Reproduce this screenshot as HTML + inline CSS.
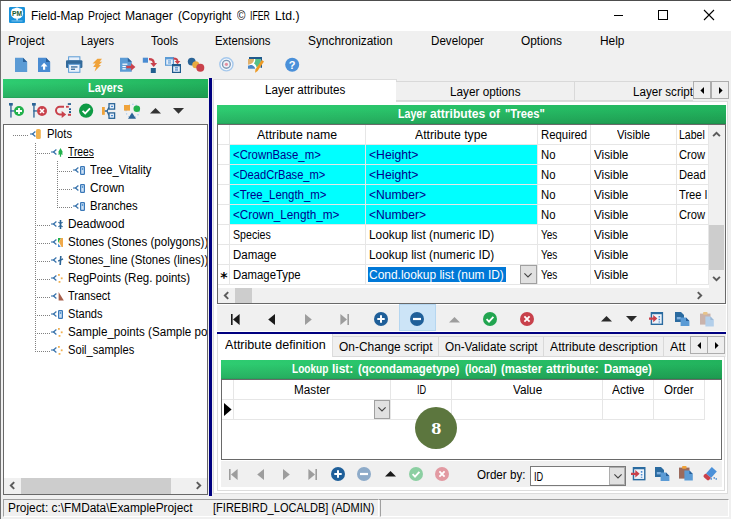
<!DOCTYPE html>
<html><head><meta charset="utf-8"><title>Field-Map Project Manager</title>
<style>
html,body{margin:0;padding:0;background:#f0f0f0;}
body{width:731px;height:519px;overflow:hidden;background:#f0f0f0;font-family:"Liberation Sans",sans-serif;font-size:12px;color:#000;position:relative;}
.a{position:absolute;white-space:nowrap;}
.t{position:absolute;white-space:nowrap;line-height:15px;height:15px;}
.g{background:linear-gradient(180deg,rgba(0,0,0,0) 0%,rgba(0,0,0,0) 20%,rgba(0,0,0,.13) 92%,rgba(0,0,0,.22) 100%),linear-gradient(90deg,#2ecc71 0%,#22b35d 100%);}
svg{position:absolute;overflow:visible;}
</style></head><body>
<div class="a" style="left:0px;top:0px;width:731px;height:1px;background:#4d4d4d;"></div>
<div class="a" style="left:0px;top:1px;width:1px;height:518px;background:#707070;"></div>
<div class="a" style="left:1px;top:1px;width:730px;height:30px;background:#fff;"></div>
<div class="t" style="left:30.7px;top:8.5px;"><span style="display:inline-block;transform-origin:0 50%;transform:scaleX(0.9839);">Field-Map</span></div>
<div class="t" style="left:87.5px;top:8.5px;"><span style="display:inline-block;transform-origin:0 50%;transform:scaleX(0.8703);">Project</span></div>
<div class="t" style="left:124.6px;top:8.5px;"><span style="display:inline-block;transform-origin:0 50%;transform:scaleX(1.0114);">Manager</span></div>
<div class="t" style="left:177.5px;top:8.5px;"><span style="display:inline-block;transform-origin:0 50%;transform:scaleX(0.9682);">(Copyright</span></div>
<div class="t" style="left:236.9px;top:8.5px;"><span style="display:inline-block;transform-origin:0 50%;transform:scaleX(0.9498);">©</span></div>
<div class="t" style="left:250.3px;top:8.5px;"><span style="display:inline-block;transform-origin:0 50%;transform:scaleX(0.7282);">IFER</span></div>
<div class="t" style="left:274.8px;top:8.5px;"><span style="display:inline-block;transform-origin:0 50%;transform:scaleX(1.0208);">Ltd.)</span></div>
<div class="t" style="left:7.5px;top:33.5px;"><span style="display:inline-block;transform-origin:0 50%;transform:scaleX(0.9774);">Project</span></div>
<div class="t" style="left:81.0px;top:33.5px;"><span style="display:inline-block;transform-origin:0 50%;transform:scaleX(0.9163);">Layers</span></div>
<div class="t" style="left:151.0px;top:33.5px;"><span style="display:inline-block;transform-origin:0 50%;transform:scaleX(0.9637);">Tools</span></div>
<div class="t" style="left:215.0px;top:33.5px;"><span style="display:inline-block;transform-origin:0 50%;transform:scaleX(0.9457);">Extensions</span></div>
<div class="t" style="left:308.0px;top:33.5px;"><span style="display:inline-block;transform-origin:0 50%;transform:scaleX(0.9898);">Synchronization</span></div>
<div class="t" style="left:430.5px;top:33.5px;"><span style="display:inline-block;transform-origin:0 50%;transform:scaleX(0.9689);">Developer</span></div>
<div class="t" style="left:521.0px;top:33.5px;"><span style="display:inline-block;transform-origin:0 50%;transform:scaleX(0.9917);">Options</span></div>
<div class="t" style="left:599.5px;top:33.5px;"><span style="display:inline-block;transform-origin:0 50%;transform:scaleX(0.9924);">Help</span></div>
<div class="a g" style="left:3px;top:79px;width:205px;height:19px"></div>
<div class="t" style="left:88.0px;top:80.5px;font-weight:bold;color:#fff;"><span style="display:inline-block;transform-origin:0 50%;transform:scaleX(0.9047);">Layers</span></div>
<div class="a" style="left:3px;top:124px;width:205px;height:371px;background:#fff;box-sizing:border-box;border:1px solid #696969;"></div>
<div class="t" style="left:46.6px;top:126.5px;"><span style="display:inline-block;transform-origin:0 50%;transform:scaleX(0.9373);">Plots</span></div>
<div class="t" style="left:68.3px;top:144.5px;"><span style="display:inline-block;transform-origin:0 50%;transform:scaleX(0.8566);text-decoration:underline;">Trees</span></div>
<div class="t" style="left:90.3px;top:162.5px;"><span style="display:inline-block;transform-origin:0 50%;transform:scaleX(0.9299);">Tree_Vitality</span></div>
<div class="t" style="left:90.3px;top:180.5px;"><span style="display:inline-block;transform-origin:0 50%;transform:scaleX(0.9946);">Crown</span></div>
<div class="t" style="left:90.3px;top:198.5px;"><span style="display:inline-block;transform-origin:0 50%;transform:scaleX(0.9391);">Branches</span></div>
<div class="t" style="left:68.3px;top:216.5px;"><span style="display:inline-block;transform-origin:0 50%;transform:scaleX(0.9847);">Deadwood</span></div>
<div class="t" style="left:68.3px;top:234.5px;width:138.7px;overflow:hidden;"><span style="display:inline-block;transform-origin:0 50%;transform:scaleX(0.9651);">Stones (Stones (polygons))</span></div>
<div class="t" style="left:68.3px;top:252.5px;width:138.7px;overflow:hidden;"><span style="display:inline-block;transform-origin:0 50%;transform:scaleX(0.9519);">Stones_line (Stones (lines))</span></div>
<div class="t" style="left:68.3px;top:270.5px;"><span style="display:inline-block;transform-origin:0 50%;transform:scaleX(0.9586);">RegPoints (Reg. points)</span></div>
<div class="t" style="left:68.3px;top:288.5px;"><span style="display:inline-block;transform-origin:0 50%;transform:scaleX(0.9149);">Transect</span></div>
<div class="t" style="left:68.3px;top:306.5px;"><span style="display:inline-block;transform-origin:0 50%;transform:scaleX(0.9238);">Stands</span></div>
<div class="t" style="left:68.3px;top:324.5px;width:138.7px;overflow:hidden;"><span style="display:inline-block;transform-origin:0 50%;transform:scaleX(0.9680);">Sample_points (Sample points)</span></div>
<div class="t" style="left:68.3px;top:342.5px;"><span style="display:inline-block;transform-origin:0 50%;transform:scaleX(0.9289);">Soil_samples</span></div>
<div class="a" style="left:4px;top:478px;width:203px;height:16px;background:#f0f0f0;"></div>
<div class="a" style="left:21px;top:478px;width:150px;height:16px;background:#cdcdcd;"></div>
<div class="a" style="left:209px;top:78px;width:3px;height:418px;background:#000080;"></div>
<div class="a" style="left:213px;top:101px;width:515px;height:393px;background:#fff;box-sizing:border-box;border:1px solid #dcdcdc;"></div>
<div class="a" style="left:213px;top:79px;width:184px;height:23px;background:#fff;box-sizing:border-box;border:1px solid #dcdcdc;border-bottom:none;"></div>
<div class="t" style="left:264.6px;top:82.5px;"><span style="display:inline-block;transform-origin:0 50%;transform:scaleX(0.9699);">Layer attributes</span></div>
<div class="a" style="left:396px;top:81px;width:297px;height:20px;background:#f0f0f0;box-sizing:border-box;border-top:1px solid #d9d9d9;border-bottom:1px solid #d9d9d9;"></div>
<div class="a" style="left:574px;top:82px;width:1px;height:19px;background:#d9d9d9;"></div>
<div class="t" style="left:449.5px;top:84.5px;"><span style="display:inline-block;transform-origin:0 50%;transform:scaleX(0.9787);">Layer options</span></div>
<div class="t" style="left:632.5px;top:84.5px;width:61px;overflow:hidden;"><span style="display:inline-block;transform-origin:0 50%;transform:scaleX(0.9675);">Layer script</span></div>
<div class="a" style="left:693px;top:81px;width:18px;height:18px;background:#eee;box-sizing:border-box;border:1px solid #adadad;"></div>
<div class="a" style="left:711px;top:81px;width:18px;height:18px;background:#eee;box-sizing:border-box;border:1px solid #adadad;"></div>
<div class="a g" style="left:217px;top:105px;width:509px;height:19px"></div>
<div class="t" style="left:397.7px;top:106.9px;font-weight:bold;color:#fff;"><span style="display:inline-block;transform-origin:0 50%;transform:scaleX(0.8871);">Layer</span></div>
<div class="t" style="left:430.0px;top:106.9px;font-weight:bold;color:#fff;"><span style="display:inline-block;transform-origin:0 50%;transform:scaleX(1.0097);">attributes</span></div>
<div class="t" style="left:488.5px;top:106.9px;font-weight:bold;color:#fff;"><span style="display:inline-block;transform-origin:0 50%;transform:scaleX(0.9622);">of</span></div>
<div class="t" style="left:504.5px;top:106.9px;font-weight:bold;color:#fff;"><span style="display:inline-block;transform-origin:0 50%;transform:scaleX(0.9313);">"Trees"</span></div>
<div class="a" style="left:217px;top:124px;width:509px;height:180px;background:#fff;box-sizing:border-box;border:1px solid #696969;"></div>
<div class="a" style="left:230px;top:145px;width:135px;height:19px;background:#00ffff;"></div>
<div class="a" style="left:366px;top:145px;width:171px;height:19px;background:#00ffff;"></div>
<div class="a" style="left:230px;top:165px;width:135px;height:19px;background:#00ffff;"></div>
<div class="a" style="left:366px;top:165px;width:171px;height:19px;background:#00ffff;"></div>
<div class="a" style="left:230px;top:185px;width:135px;height:19px;background:#00ffff;"></div>
<div class="a" style="left:366px;top:185px;width:171px;height:19px;background:#00ffff;"></div>
<div class="a" style="left:230px;top:205px;width:135px;height:19px;background:#00ffff;"></div>
<div class="a" style="left:366px;top:205px;width:171px;height:19px;background:#00ffff;"></div>
<div class="a" style="left:229px;top:125px;width:1px;height:160px;background:#e6e6e6;"></div>
<div class="a" style="left:365px;top:125px;width:1px;height:160px;background:#e6e6e6;"></div>
<div class="a" style="left:537px;top:125px;width:1px;height:160px;background:#e6e6e6;"></div>
<div class="a" style="left:590px;top:125px;width:1px;height:160px;background:#e6e6e6;"></div>
<div class="a" style="left:676px;top:125px;width:1px;height:160px;background:#e6e6e6;"></div>
<div class="a" style="left:708px;top:125px;width:1px;height:160px;background:#e6e6e6;"></div>
<div class="a" style="left:218px;top:144px;width:491px;height:1px;background:#e6e6e6;"></div>
<div class="a" style="left:218px;top:164px;width:491px;height:1px;background:#e6e6e6;"></div>
<div class="a" style="left:218px;top:184px;width:491px;height:1px;background:#e6e6e6;"></div>
<div class="a" style="left:218px;top:204px;width:491px;height:1px;background:#e6e6e6;"></div>
<div class="a" style="left:218px;top:224px;width:491px;height:1px;background:#e6e6e6;"></div>
<div class="a" style="left:218px;top:244px;width:491px;height:1px;background:#e6e6e6;"></div>
<div class="a" style="left:218px;top:264px;width:491px;height:1px;background:#e6e6e6;"></div>
<div class="a" style="left:218px;top:284px;width:491px;height:1px;background:#e6e6e6;"></div>
<div class="t" style="left:257.3px;top:127.8px;"><span style="display:inline-block;transform-origin:0 50%;transform:scaleX(1.0267);">Attribute name</span></div>
<div class="t" style="left:415.4px;top:127.8px;"><span style="display:inline-block;transform-origin:0 50%;transform:scaleX(1.0230);">Attribute type</span></div>
<div class="t" style="left:541.3px;top:127.8px;"><span style="display:inline-block;transform-origin:0 50%;transform:scaleX(0.9466);">Required</span></div>
<div class="t" style="left:617.0px;top:127.8px;"><span style="display:inline-block;transform-origin:0 50%;transform:scaleX(0.9391);">Visible</span></div>
<div class="t" style="left:678.7px;top:127.8px;"><span style="display:inline-block;transform-origin:0 50%;transform:scaleX(0.8788);">Label</span></div>
<div class="t" style="left:233.2px;top:148.0px;color:#00008c;"><span style="display:inline-block;transform-origin:0 50%;transform:scaleX(0.9468);">&lt;CrownBase_m&gt;</span></div>
<div class="t" style="left:369.2px;top:148.0px;color:#00008c;"><span style="display:inline-block;transform-origin:0 50%;transform:scaleX(1.0160);">&lt;Height&gt;</span></div>
<div class="t" style="left:540.5px;top:148.0px;"><span style="display:inline-block;transform-origin:0 50%;transform:scaleX(0.9450);">No</span></div>
<div class="t" style="left:593.7px;top:148.0px;"><span style="display:inline-block;transform-origin:0 50%;transform:scaleX(0.9761);">Visible</span></div>
<div class="t" style="left:678.7px;top:148.0px;width:30px;overflow:hidden;"><span style="display:inline-block;transform-origin:0 50%;transform:scaleX(0.9300);">Crow</span></div>
<div class="t" style="left:233.2px;top:168.0px;color:#00008c;"><span style="display:inline-block;transform-origin:0 50%;transform:scaleX(0.9295);">&lt;DeadCrBase_m&gt;</span></div>
<div class="t" style="left:369.2px;top:168.0px;color:#00008c;"><span style="display:inline-block;transform-origin:0 50%;transform:scaleX(1.0160);">&lt;Height&gt;</span></div>
<div class="t" style="left:540.5px;top:168.0px;"><span style="display:inline-block;transform-origin:0 50%;transform:scaleX(0.9450);">No</span></div>
<div class="t" style="left:593.7px;top:168.0px;"><span style="display:inline-block;transform-origin:0 50%;transform:scaleX(0.9761);">Visible</span></div>
<div class="t" style="left:678.7px;top:168.0px;width:30px;overflow:hidden;"><span style="display:inline-block;transform-origin:0 50%;transform:scaleX(0.9300);">Dead</span></div>
<div class="t" style="left:233.2px;top:188.0px;color:#00008c;"><span style="display:inline-block;transform-origin:0 50%;transform:scaleX(0.9512);">&lt;Tree_Length_m&gt;</span></div>
<div class="t" style="left:369.2px;top:188.0px;color:#00008c;"><span style="display:inline-block;transform-origin:0 50%;transform:scaleX(1.0085);">&lt;Number&gt;</span></div>
<div class="t" style="left:540.5px;top:188.0px;"><span style="display:inline-block;transform-origin:0 50%;transform:scaleX(0.9450);">No</span></div>
<div class="t" style="left:593.7px;top:188.0px;"><span style="display:inline-block;transform-origin:0 50%;transform:scaleX(0.9761);">Visible</span></div>
<div class="t" style="left:678.7px;top:188.0px;width:30px;overflow:hidden;"><span style="display:inline-block;transform-origin:0 50%;transform:scaleX(0.9300);">Tree l</span></div>
<div class="t" style="left:233.2px;top:208.0px;color:#00008c;"><span style="display:inline-block;transform-origin:0 50%;transform:scaleX(0.9784);">&lt;Crown_Length_m&gt;</span></div>
<div class="t" style="left:369.2px;top:208.0px;color:#00008c;"><span style="display:inline-block;transform-origin:0 50%;transform:scaleX(1.0085);">&lt;Number&gt;</span></div>
<div class="t" style="left:540.5px;top:208.0px;"><span style="display:inline-block;transform-origin:0 50%;transform:scaleX(0.9450);">No</span></div>
<div class="t" style="left:593.7px;top:208.0px;"><span style="display:inline-block;transform-origin:0 50%;transform:scaleX(0.9761);">Visible</span></div>
<div class="t" style="left:678.7px;top:208.0px;width:30px;overflow:hidden;"><span style="display:inline-block;transform-origin:0 50%;transform:scaleX(0.9300);">Crow</span></div>
<div class="t" style="left:233.2px;top:228.0px;"><span style="display:inline-block;transform-origin:0 50%;transform:scaleX(0.8855);">Species</span></div>
<div class="t" style="left:369.2px;top:228.0px;"><span style="display:inline-block;transform-origin:0 50%;transform:scaleX(0.9881);">Lookup list (numeric ID)</span></div>
<div class="t" style="left:540.5px;top:228.0px;"><span style="display:inline-block;transform-origin:0 50%;transform:scaleX(0.8326);">Yes</span></div>
<div class="t" style="left:593.7px;top:228.0px;"><span style="display:inline-block;transform-origin:0 50%;transform:scaleX(0.9761);">Visible</span></div>
<div class="t" style="left:233.2px;top:248.0px;"><span style="display:inline-block;transform-origin:0 50%;transform:scaleX(0.9546);">Damage</span></div>
<div class="t" style="left:369.2px;top:248.0px;"><span style="display:inline-block;transform-origin:0 50%;transform:scaleX(0.9881);">Lookup list (numeric ID)</span></div>
<div class="t" style="left:540.5px;top:248.0px;"><span style="display:inline-block;transform-origin:0 50%;transform:scaleX(0.8326);">Yes</span></div>
<div class="t" style="left:593.7px;top:248.0px;"><span style="display:inline-block;transform-origin:0 50%;transform:scaleX(0.9761);">Visible</span></div>
<div class="a" style="left:368px;top:267px;width:138px;height:15px;background:#0078d7;"></div>
<div class="t" style="left:233.2px;top:268.0px;"><span style="display:inline-block;transform-origin:0 50%;transform:scaleX(0.9471);">DamageType</span></div>
<div class="t" style="left:369.2px;top:268.0px;color:#fff;"><span style="display:inline-block;transform-origin:0 50%;transform:scaleX(0.9958);">Cond.lookup list (num ID)</span></div>
<div class="t" style="left:540.5px;top:268.0px;"><span style="display:inline-block;transform-origin:0 50%;transform:scaleX(0.8326);">Yes</span></div>
<div class="t" style="left:593.7px;top:268.0px;"><span style="display:inline-block;transform-origin:0 50%;transform:scaleX(0.9761);">Visible</span></div>
<div class="t" style="left:220.3px;top:268.5px;font-family:'DejaVu Sans',sans-serif;font-weight:bold;font-size:14px;line-height:16px;height:16px">*</div>
<div class="a" style="left:520px;top:265px;width:17px;height:19px;background:#e1e1e1;box-sizing:border-box;border:1px solid #a0a0a0;"></div>
<div class="a" style="left:709px;top:125px;width:16px;height:163px;background:#f0f0f0;"></div>
<div class="a" style="left:709px;top:225px;width:15px;height:45px;background:#cdcdcd;"></div>
<div class="a" style="left:218px;top:288px;width:507px;height:15px;background:#f0f0f0;"></div>
<div class="a" style="left:235px;top:288px;width:17px;height:15px;background:#cdcdcd;"></div>
<div class="a" style="left:217px;top:305px;width:509px;height:26px;background:#f0f0f0;"></div>
<div class="a" style="left:399px;top:304px;width:37px;height:27px;background:#cce4f7;box-sizing:border-box;border:1px solid #b5d6f0;"></div>
<div class="a" style="left:217px;top:332px;width:509px;height:2px;background:#000080;"></div>
<div class="a" style="left:217px;top:334px;width:509px;height:23px;background:#f0f0f0;"></div>
<div class="a" style="left:217px;top:356px;width:508px;height:135px;background:#fff;box-sizing:border-box;border:1px solid #dcdcdc;"></div>
<div class="a" style="left:217px;top:334px;width:116px;height:23px;background:#fff;box-sizing:border-box;border:1px solid #dcdcdc;border-bottom:none;border-top:none;"></div>
<div class="t" style="left:225.0px;top:338.1px;"><span style="display:inline-block;transform-origin:0 50%;transform:scaleX(1.0476);">Attribute definition</span></div>
<div class="a" style="left:333px;top:336px;width:357px;height:21px;background:#f0f0f0;box-sizing:border-box;border-top:1px solid #d9d9d9;border-bottom:1px solid #d9d9d9;"></div>
<div class="a" style="left:438px;top:337px;width:1px;height:19px;background:#d9d9d9;"></div>
<div class="a" style="left:543px;top:337px;width:1px;height:19px;background:#d9d9d9;"></div>
<div class="a" style="left:663px;top:337px;width:1px;height:19px;background:#d9d9d9;"></div>
<div class="t" style="left:338.5px;top:339.9px;"><span style="display:inline-block;transform-origin:0 50%;transform:scaleX(0.9944);">On-Change script</span></div>
<div class="t" style="left:445.0px;top:339.9px;"><span style="display:inline-block;transform-origin:0 50%;transform:scaleX(0.9802);">On-Validate script</span></div>
<div class="t" style="left:549.8px;top:339.9px;"><span style="display:inline-block;transform-origin:0 50%;transform:scaleX(1.0167);">Attribute description</span></div>
<div class="t" style="left:669.8px;top:339.9px;"><span style="display:inline-block;transform-origin:0 50%;transform:scaleX(1.0576);">Att</span></div>
<div class="a" style="left:690px;top:336px;width:18px;height:18px;background:#eee;box-sizing:border-box;border:1px solid #adadad;"></div>
<div class="a" style="left:707px;top:336px;width:18px;height:18px;background:#eee;box-sizing:border-box;border:1px solid #adadad;"></div>
<div class="a g" style="left:221px;top:360px;width:501px;height:19px"></div>
<div class="t" style="left:291.5px;top:362.1px;font-weight:bold;color:#fff;"><span style="display:inline-block;transform-origin:0 50%;transform:scaleX(0.8404);">Lookup</span></div>
<div class="t" style="left:331.8px;top:362.1px;font-weight:bold;color:#fff;"><span style="display:inline-block;transform-origin:0 50%;transform:scaleX(0.9987);">list:</span></div>
<div class="t" style="left:357.8px;top:362.1px;font-weight:bold;color:#fff;"><span style="display:inline-block;transform-origin:0 50%;transform:scaleX(0.9506);">(qcondamagetype)</span></div>
<div class="t" style="left:464.9px;top:362.1px;font-weight:bold;color:#fff;"><span style="display:inline-block;transform-origin:0 50%;transform:scaleX(0.8916);">(local)</span></div>
<div class="t" style="left:501.0px;top:362.1px;font-weight:bold;color:#fff;"><span style="display:inline-block;transform-origin:0 50%;transform:scaleX(0.9479);">(master</span></div>
<div class="t" style="left:546.2px;top:362.1px;font-weight:bold;color:#fff;"><span style="display:inline-block;transform-origin:0 50%;transform:scaleX(1.0154);">attribute:</span></div>
<div class="t" style="left:603.6px;top:362.1px;font-weight:bold;color:#fff;"><span style="display:inline-block;transform-origin:0 50%;transform:scaleX(0.9450);">Damage)</span></div>
<div class="a" style="left:221px;top:379px;width:501px;height:81px;background:#fff;box-sizing:border-box;border:1px solid #696969;"></div>
<div class="a" style="left:233px;top:380px;width:1px;height:40px;background:#e6e6e6;"></div>
<div class="a" style="left:390px;top:380px;width:1px;height:40px;background:#e6e6e6;"></div>
<div class="a" style="left:451px;top:380px;width:1px;height:40px;background:#e6e6e6;"></div>
<div class="a" style="left:602px;top:380px;width:1px;height:40px;background:#e6e6e6;"></div>
<div class="a" style="left:653px;top:380px;width:1px;height:40px;background:#e6e6e6;"></div>
<div class="a" style="left:704px;top:380px;width:1px;height:40px;background:#e6e6e6;"></div>
<div class="a" style="left:222px;top:399px;width:483px;height:1px;background:#e6e6e6;"></div>
<div class="a" style="left:222px;top:419px;width:483px;height:1px;background:#e6e6e6;"></div>
<div class="t" style="left:294.2px;top:383.1px;"><span style="display:inline-block;transform-origin:0 50%;transform:scaleX(0.9762);">Master</span></div>
<div class="t" style="left:416.8px;top:383.1px;"><span style="display:inline-block;transform-origin:0 50%;transform:scaleX(0.7667);">ID</span></div>
<div class="t" style="left:512.8px;top:383.1px;"><span style="display:inline-block;transform-origin:0 50%;transform:scaleX(0.9800);">Value</span></div>
<div class="t" style="left:611.5px;top:383.1px;"><span style="display:inline-block;transform-origin:0 50%;transform:scaleX(0.9947);">Active</span></div>
<div class="t" style="left:664.0px;top:383.1px;"><span style="display:inline-block;transform-origin:0 50%;transform:scaleX(0.9618);">Order</span></div>
<div class="a" style="left:374px;top:400px;width:16px;height:19px;background:#e1e1e1;box-sizing:border-box;border:1px solid #a0a0a0;"></div>
<div class="a" style="left:415px;top:407px;width:42px;height:42px;border-radius:21px;background:#5c763e"></div>
<div class="t" style="left:415px;top:418px;width:42px;height:20px;line-height:20px;text-align:center;color:#fff;font-family:'Liberation Serif',serif;font-weight:bold;font-size:17.5px"><span style="display:inline-block;transform:scaleX(1.15)">8</span></div>
<div class="a" style="left:221px;top:461px;width:501px;height:26px;background:#f0f0f0;"></div>
<div class="t" style="left:477.4px;top:467.9px;"><span style="display:inline-block;transform-origin:0 50%;transform:scaleX(0.9680);">Order by:</span></div>
<div class="a" style="left:530px;top:466px;width:96px;height:20px;background:#fff;box-sizing:border-box;border:1px solid #7a7a7a;"></div>
<div class="t" style="left:533.5px;top:469.5px;"><span style="display:inline-block;transform-origin:0 50%;transform:scaleX(0.7667);">ID</span></div>
<div class="a" style="left:609px;top:467px;width:16px;height:18px;background:#e1e1e1;box-sizing:border-box;border:1px solid #adadad;"></div>
<div class="a" style="left:3px;top:499px;width:726px;height:1px;background:#a0a0a0;"></div>
<div class="a" style="left:3px;top:499px;width:376px;height:18px;background:#f0f0f0;box-sizing:border-box;border:1px solid #a0a0a0;border-right-color:#fff;border-bottom-color:#fff;"></div>
<div class="t" style="left:7.5px;top:500.5px;"><span style="display:inline-block;transform-origin:0 50%;transform:scaleX(0.9883);">Project: c:\FMData\ExampleProject</span></div>
<div class="t" style="left:213.0px;top:500.5px;"><span style="display:inline-block;transform-origin:0 50%;transform:scaleX(0.9205);">[FIREBIRD_LOCALDB] (ADMIN)</span></div>
<div class="a" style="left:380px;top:499px;width:349px;height:18px;background:#f0f0f0;box-sizing:border-box;border:1px solid #a0a0a0;border-right-color:#fff;border-bottom-color:#fff;"></div>
<svg style="left:9px;top:7px" width="16" height="16" viewBox="0 0 16 16"><rect x="0" y="0" width="16" height="16" rx="1.200" fill="#1a92da"/><ellipse cx="8" cy="6.400" rx="6.100" ry="5.400" fill="#fff"/><circle cx="5" cy="4" r="2.600" fill="#fff"/><circle cx="11" cy="4" r="2.600" fill="#fff"/><circle cx="8" cy="3" r="2.600" fill="#fff"/><path d="M7.200 11h1.800l-.3 2.500h-1.200z" fill="#e8f4fb"/><rect x="2.500" y="13.500" width="11" height=".9" fill="#8fcaee"/><text x="8.100" y="9.300" font-size="7.200" font-weight="bold" text-anchor="middle" fill="#175a31" textLength="10" lengthAdjust="spacingAndGlyphs" font-family="Liberation Sans,sans-serif">PM</text></svg>
<svg style="left:614px;top:15px" width="9" height="1" viewBox="0 0 9 1"><rect width="9" height="1" fill="#000"/></svg>
<svg style="left:658px;top:10px" width="10" height="10" viewBox="0 0 10 10"><rect x=".5" y=".5" width="9" height="9" fill="none" stroke="#000" stroke-width="1"/></svg>
<svg style="left:704px;top:10px" width="10" height="10" viewBox="0 0 10 10"><path d="M0 0L10 10M10 0L0 10" stroke="#000" stroke-width="1.1" fill="none"/></svg>
<svg style="left:15px;top:57px" width="13" height="16" viewBox="0 0 13 16"><path d="M0 .7h8l4.2 4.2v10H0z" fill="#5b9bd5"/><path d="M8 .7l4.2 4.2H8z" fill="#2a6099"/></svg>
<svg style="left:38px;top:57px" width="13" height="16" viewBox="0 0 13 16"><path d="M0 .7h8l4.2 4.2v10H0z" fill="#4a8cd2"/><path d="M8 .7l4.2 4.2H8z" fill="#2a6099"/><path d="M6.1 5.8l3.4 3.8H7.2v3.2H5V9.600H2.700z" fill="#fff"/></svg>
<svg style="left:66px;top:56px" width="17" height="17" viewBox="0 0 17 17"><rect x="2.600" y=".8" width="11.3" height="4" fill="#e8f0fa" stroke="#5b9bd5" stroke-width="1"/><rect x="0" y="4.2" width="16.4" height="7.800" rx="1" fill="#336a9a"/><rect x="2.600" y="8.300" width="11.3" height="8" fill="#eaf2fb" stroke="#5b9bd5" stroke-width="1"/><rect x="5" y="10.3" width="6.500" height="1.300" fill="#336a9a"/><rect x="5" y="12.600" width="4" height="1.300" fill="#336a9a"/></svg>
<svg style="left:92px;top:58px" width="11" height="14" viewBox="0 0 11 14"><path d="M5.400 .8L10 .8 7.600 3.800 10.200 3.800 6.800 7 9 7 2.600 13.600 4 9 1.200 9 3.600 5.600 .6 5.600z" fill="#f0a33a"/></svg>
<svg style="left:120px;top:57px" width="16" height="16" viewBox="0 0 16 16"><path d="M0 .7h7.800l4 4v10H0z" fill="#5b9bd5"/><path d="M7.800 .7l4 4H7.800z" fill="#2a6099"/><rect x="2.400" y="6.600" width="5" height="1.200" fill="#fff"/><rect x="2.400" y="8.900" width="3.400" height="1.200" fill="#fff"/><rect x="2.400" y="11.200" width="3.400" height="1.200" fill="#fff"/><path d="M6.300 8.700h4.800V6.300l4.300 3.700-4.300 3.700v-2.400H6.300z" fill="#c9414b"/></svg>
<svg style="left:142px;top:57px" width="16" height="16" viewBox="0 0 16 16"><rect x=".8" y=".7" width="5.200" height="5" fill="#4a8cd2"/><rect x="8.800" y="11" width="5" height="5" fill="#22608f"/><path d="M7 2.200c3.300 0 4.800 1.300 4.800 4.200" stroke="#c9414b" stroke-width="2.200" fill="none"/><path d="M8.300 6l3.400 4 3.400-4z" fill="#c9414b"/></svg>
<svg style="left:165px;top:57px" width="17" height="16" viewBox="0 0 17 16"><rect x="0" y="0" width="9" height="8.800" fill="#5b9bd5"/><rect x="1.200" y="2.400" width="6.600" height="5.200" fill="#e4eefa"/><rect x="3" y="3.400" width="3" height="1.100" fill="#5b9bd5"/><rect x="3" y="5.400" width="3" height="1.100" fill="#5b9bd5"/><rect x="7" y="7" width="9" height="9" fill="#1f5a8c"/><rect x="8.200" y="9.300" width="6.600" height="5.500" fill="#e4eefa"/><rect x="10" y="10.300" width="3" height="1.100" fill="#3f7fc0"/><rect x="10" y="12.400" width="3" height="1.100" fill="#3f7fc0"/><path d="M8.500 1.600c3 0 4 .6 4 3" stroke="#c9414b" stroke-width="2" fill="none"/><path d="M9.600 4l2.900 3.300L15.400 4z" fill="#c9414b"/></svg>
<svg style="left:187px;top:57px" width="18" height="16" viewBox="0 0 18 16"><circle cx="4.700" cy="4.600" r="3.900" fill="#2b6496"/><circle cx="8.800" cy="7.700" r="3.500" fill="#e9aa3f"/><circle cx="13.300" cy="10.700" r="4" fill="#c9414b"/></svg>
<svg style="left:219px;top:57px" width="15" height="15" viewBox="0 0 15 15"><circle cx="7.400" cy="7.300" r="6.600" fill="#f3f7fc" stroke="#a5c8ec" stroke-width="1.400"/><circle cx="7.400" cy="7.300" r="3.900" fill="#eef2f7" stroke="#7d98b5" stroke-width="1.400"/><circle cx="7.400" cy="7.300" r="1.600" fill="#e58fa0"/></svg>
<svg style="left:248px;top:57px" width="17" height="16" viewBox="0 0 17 16"><rect x="0" y="2" width="12.500" height="9.800" fill="#fff"/><rect x="1" y="0" width="13" height="2" fill="#1f5a8c"/><rect x="12.500" y="0" width="1.500" height="10.800" fill="#1f5a8c"/><path d="M0 2H6.100C6.100 5 4 7.200 0 7.700z" fill="#e0b06a"/><path d="M7.200 2H12.500V7.500L8.600 10.400C8.200 8.400 7.200 7.200 6 6.500 7 5 7.400 3.500 7.200 2z" fill="#56c088"/><path d="M0 8.600C2 8.400 3 7.600 4.400 8.200 6 9 7 10 7.300 11.800H0z" fill="#4a86c5"/><path d="M13.800 3L16 4.500 9.600 14 7.100 15.800 7.400 12.600z" fill="#ee9a24"/></svg>
<svg style="left:285px;top:57px" width="15" height="15" viewBox="0 0 15 15"><circle cx="7.200" cy="7.700" r="7" fill="#4a90d9"/><text x="7.200" y="11.700" font-size="11" font-weight="bold" text-anchor="middle" fill="#fff" font-family="Liberation Sans,sans-serif">?</text></svg>
<svg style="left:9px;top:103px" width="16" height="16" viewBox="0 0 16 16"><rect x="0" y="0" width="3.800" height="2.600" fill="#2b6496"/><rect x="1.300" y="0" width="1.300" height="14.600" fill="#2b6496"/><rect x="1.300" y="7.300" width="4" height="1.300" fill="#2b6496"/><circle cx="10" cy="8" r="5" fill="#22b14c"/><path d="M7 8h6M10 5v6" stroke="#fff" stroke-width="1.800"/></svg>
<svg style="left:32px;top:103px" width="16" height="16" viewBox="0 0 16 16"><rect x="0" y="0" width="3.800" height="2.600" fill="#2b6496"/><rect x="1.300" y="0" width="1.300" height="14.600" fill="#2b6496"/><rect x="1.300" y="7.300" width="4" height="1.300" fill="#2b6496"/><circle cx="10" cy="8" r="5" fill="#c9414b"/><path d="M8 6l4 4M12 6l-4 4" stroke="#fff" stroke-width="1.600"/></svg>
<svg style="left:55px;top:103px" width="17" height="16" viewBox="0 0 17 16"><path d="M9 3.800H4.800A3.800 3.800 0 0 0 4.800 11.400H7" stroke="#c9414b" stroke-width="2" fill="none"/><path d="M6.700 7.900L11.200 11.400 6.700 15z" fill="#c9414b"/><rect x="12.800" y=".2" width="3.200" height="1.700" fill="#1f5a8c"/><rect x="11" y="2.900" width="2.800" height="1.800" fill="#c9414b"/><rect x="14" y="5.300" width="2" height="1.700" fill="#1f5a8c"/><rect x="14" y="8.100" width="2" height="1.900" fill="#1f5a8c"/><rect x="12.900" y="10.800" width="3.100" height="2" fill="#c9414b"/></svg>
<svg style="left:79px;top:103px" width="15" height="15" viewBox="0 0 15 15"><circle cx="7.100" cy="7.700" r="7.100" fill="#0f9b45"/><path d="M3.600 7.800l2.600 2.600 4.800-5" stroke="#fff" stroke-width="1.800" fill="none"/></svg>
<svg style="left:102px;top:103px" width="14" height="16" viewBox="0 0 14 16"><rect x="0" y="4" width="2.800" height="7.800" fill="#f0a33a"/><path d="M2.800 8h2.400M5 8l2-3.600M5 8l2 4.600" stroke="#2b6496" stroke-width="1.300" fill="none"/><rect x="7" y=".7" width="5.600" height="5.400" fill="#e4eefa" stroke="#2b6496" stroke-width="1.300"/><rect x="7" y="9.900" width="5.600" height="5.400" fill="#e4eefa" stroke="#2b6496" stroke-width="1.300"/><rect x="9" y="2.800" width="2" height="1.200" fill="#4a8cd2"/><rect x="9" y="12" width="2" height="1.200" fill="#4a8cd2"/></svg>
<svg style="left:124px;top:103px" width="17" height="16" viewBox="0 0 17 16"><circle cx="8.600" cy="8" r="6.600" fill="none" stroke="#9cc2ea" stroke-width="1.200" stroke-dasharray="1.200 2.200"/><rect x="0" y="2" width="6" height="5.600" fill="#f0a33a"/><circle cx="12.800" cy="5.700" r="3.300" fill="#22b14c"/><path d="M4 15.800l4-6.400 4 6.400z" fill="#2b6496"/></svg>
<svg style="left:150px;top:108px" width="11" height="6" viewBox="0 0 11 6"><path d="M0 5.600L5.500 0 11 5.600z" fill="#333"/></svg>
<svg style="left:173px;top:108px" width="11" height="6" viewBox="0 0 11 6"><path d="M0 0h11L5.500 5.800z" fill="#333"/></svg>
<svg style="left:699.5px;top:86.5px" width="4" height="7" viewBox="0 0 4 7"><path d="M4 0v7L.4 3.500z" fill="#000"/></svg>
<svg style="left:718.5px;top:86.5px" width="4" height="7" viewBox="0 0 4 7"><path d="M0 0v7l3.600-3.500z" fill="#000"/></svg>
<svg style="left:696.5px;top:341.5px" width="4" height="7" viewBox="0 0 4 7"><path d="M4 0v7L.4 3.500z" fill="#000"/></svg>
<svg style="left:714.5px;top:341.5px" width="4" height="7" viewBox="0 0 4 7"><path d="M0 0v7l3.600-3.500z" fill="#000"/></svg>
<svg style="left:230.5px;top:314.0px" width="9" height="11" viewBox="0 0 9 11"><rect x="0" y="0" width="1.600" height="11" fill="#1a1a1a"/><path d="M8.600 0v11L2 5.500z" fill="#1a1a1a"/></svg>
<svg style="left:267.5px;top:314.0px" width="7" height="11" viewBox="0 0 7 11"><path d="M7 0v11L.2 5.500z" fill="#1a1a1a"/></svg>
<svg style="left:304.5px;top:314.0px" width="7" height="11" viewBox="0 0 7 11"><path d="M0 0v11l6.800-5.500z" fill="#9d9d9d"/></svg>
<svg style="left:340.0px;top:314.0px" width="9" height="11" viewBox="0 0 9 11"><rect x="7.400" y="0" width="1.600" height="11" fill="#9d9d9d"/><path d="M.4 0v11L7 5.500z" fill="#9d9d9d"/></svg>
<svg style="left:374.3px;top:312px" width="14" height="14" viewBox="0 0 14 14"><circle cx="7" cy="7" r="7" fill="#1f5f99"/><path d="M3.300 7h7.400M7 3.300v7.400" stroke="#fff" stroke-width="2"/></svg>
<svg style="left:410px;top:312px" width="14" height="14" viewBox="0 0 14 14"><circle cx="7" cy="7" r="7" fill="#1f5f99"/><path d="M3 7h8" stroke="#fff" stroke-width="2.200"/></svg>
<svg style="left:448.7px;top:316.5px" width="11" height="6" viewBox="0 0 11 6"><path d="M0 5.600L5.5 0 11 5.600z" fill="#9d9d9d"/></svg>
<svg style="left:482.8px;top:312px" width="14" height="14" viewBox="0 0 14 14"><circle cx="7" cy="7" r="7" fill="#22a550"/><path d="M3.600 7.200l2.400 2.400 4.400-4.800" stroke="#fff" stroke-width="1.800" fill="none"/></svg>
<svg style="left:519.7px;top:312px" width="14" height="14" viewBox="0 0 14 14"><circle cx="7" cy="7" r="7" fill="#c8414b"/><path d="M4.400 4.400l5.200 5.200M9.600 4.400l-5.200 5.200" stroke="#fff" stroke-width="1.800"/></svg>
<svg style="left:600.5px;top:316.3px" width="11" height="6" viewBox="0 0 11 6"><path d="M0 5.600L5.5 0 11 5.600z" fill="#2a2a2a"/></svg>
<svg style="left:625.5px;top:316px" width="11" height="6" viewBox="0 0 11 6"><path d="M0 0h11L5.5 5.800z" fill="#2a2a2a"/></svg>
<svg style="left:648.8px;top:311.7px" width="14.0" height="13.0" viewBox="0 0 14 13"><rect x="2.400" y=".7" width="11" height="11.600" fill="#eef4fb" stroke="#2b6ba0" stroke-width="1.400"/><rect x="2.400" y=".2" width="11" height="2" fill="#2b6ba0"/><path d="M0 5.500h4.200V3L8.400 6.600 4.200 10.200V7.700H0z" fill="#c9414b"/><path d="M10.300 4v6.400" stroke="#4a8cd2" stroke-width="1.500" stroke-dasharray="1.500 1.200"/></svg>
<svg style="left:674.9px;top:312px" width="14.5" height="14.0" viewBox="0 0 14.500 14"><path d="M0 0h6l3 3v7H0z" fill="#2b6ba0"/><rect x="1.800" y="5" width="4" height="2.400" fill="#7fb0e0"/><path d="M5.600 5.500h5.400l3.400 3.400v5H5.600z" fill="#5b9bd5"/><path d="M11 5.500l3.400 3.400H11z" fill="#2a6099"/></svg>
<svg style="left:699.6px;top:311.5px" width="14.0" height="14.5" viewBox="0 0 14 14.500"><rect x="0" y="1.600" width="10.500" height="11" fill="#c9b3ac"/><rect x="3" y="0" width="4.600" height="2.800" rx="1" fill="#e8c48a"/><path d="M5.400 4.600h5l3.400 3.400v6.400H5.400z" fill="#b3cfea"/><path d="M10.400 4.600l3.400 3.400h-3.400z" fill="#9db9d6"/></svg>
<svg style="left:229.3px;top:468.5px" width="9" height="11" viewBox="0 0 9 11"><rect x="0" y="0" width="1.600" height="11" fill="#9d9d9d"/><path d="M8.600 0v11L2 5.500z" fill="#9d9d9d"/></svg>
<svg style="left:257.1px;top:468.5px" width="7" height="11" viewBox="0 0 7 11"><path d="M7 0v11L.2 5.500z" fill="#9d9d9d"/></svg>
<svg style="left:283.0px;top:468.5px" width="7" height="11" viewBox="0 0 7 11"><path d="M0 0v11l6.800-5.500z" fill="#9d9d9d"/></svg>
<svg style="left:307.5px;top:468.5px" width="9" height="11" viewBox="0 0 9 11"><rect x="7.400" y="0" width="1.600" height="11" fill="#9d9d9d"/><path d="M.4 0v11L7 5.500z" fill="#9d9d9d"/></svg>
<svg style="left:330.9px;top:466.8px" width="14" height="14" viewBox="0 0 14 14"><circle cx="7" cy="7" r="7" fill="#1f5f99"/><path d="M3.300 7h7.400M7 3.300v7.400" stroke="#fff" stroke-width="2"/></svg>
<svg style="left:357.2px;top:466.8px" width="14" height="14" viewBox="0 0 14 14"><circle cx="7" cy="7" r="7" fill="#8eabc9"/><path d="M3 7h8" stroke="#fff" stroke-width="2.200"/></svg>
<svg style="left:384.7px;top:471.2px" width="11" height="6" viewBox="0 0 11 6"><path d="M0 5.600L5.5 0 11 5.600z" fill="#1a1a1a"/></svg>
<svg style="left:408.7px;top:466.8px" width="14" height="14" viewBox="0 0 14 14"><circle cx="7" cy="7" r="7" fill="#8ccfa2"/><path d="M3.600 7.200l2.400 2.400 4.400-4.800" stroke="#fff" stroke-width="1.800" fill="none"/></svg>
<svg style="left:435px;top:466.8px" width="14" height="14" viewBox="0 0 14 14"><circle cx="7" cy="7" r="7" fill="#e29aa2"/><path d="M4.400 4.400l5.200 5.200M9.600 4.400l-5.200 5.200" stroke="#fff" stroke-width="1.800"/></svg>
<svg style="left:630.6px;top:466.8px" width="14.42" height="13.39" viewBox="0 0 14 13"><rect x="2.400" y=".7" width="11" height="11.600" fill="#eef4fb" stroke="#2b6ba0" stroke-width="1.400"/><rect x="2.400" y=".2" width="11" height="2" fill="#2b6ba0"/><path d="M0 5.500h4.200V3L8.400 6.600 4.200 10.200V7.700H0z" fill="#c9414b"/><path d="M10.300 4v6.400" stroke="#4a8cd2" stroke-width="1.500" stroke-dasharray="1.500 1.200"/></svg>
<svg style="left:654.8px;top:466.8px" width="14.5" height="14.0" viewBox="0 0 14.500 14"><path d="M0 0h6l3 3v7H0z" fill="#2b6ba0"/><rect x="1.800" y="5" width="4" height="2.400" fill="#7fb0e0"/><path d="M5.600 5.500h5.400l3.400 3.400v5H5.600z" fill="#5b9bd5"/><path d="M11 5.500l3.400 3.400H11z" fill="#2a6099"/></svg>
<svg style="left:678.6px;top:466.4px" width="14.0" height="14.5" viewBox="0 0 14 14.500"><rect x="0" y="1.600" width="10.500" height="11" fill="#9b6a5c"/><rect x="3" y="0" width="4.600" height="2.800" rx="1" fill="#f0a33a"/><path d="M5.400 4.600h5l3.400 3.400v6.400H5.400z" fill="#5b9bd5"/><path d="M10.400 4.600l3.400 3.400h-3.400z" fill="#2a6099"/></svg>
<svg style="left:702px;top:466.8px" width="15" height="14" viewBox="0 0 15 14"><path d="M9.800 0l5 4.400-5.800 6.600-5-4.400z" fill="#4a90d9"/><path d="M4 6.600l5 4.400-1.400 1.600a2 2 0 0 1-2.800 .2L2.200 10.600a2 2 0 0 1-.2-2.800z" fill="#c9414b"/><rect x="8.500" y="11.200" width="1.500" height="1.500" fill="#4a8cd2"/><rect x="11.500" y="10.200" width="1.500" height="1.500" fill="#4a8cd2"/><rect x="13.500" y="11.200" width="1.500" height="1.500" fill="#4a8cd2"/></svg>
<svg style="left:524.3px;top:273.0px" width="8" height="5" viewBox="0 0 8 5"><path d="M.4 .4L4 4 7.600 .4" stroke="#444" stroke-width="1.100" fill="none"/></svg>
<svg style="left:378px;top:407.3px" width="8" height="5" viewBox="0 0 8 5"><path d="M.4 .4L4 4 7.600 .4" stroke="#444" stroke-width="1.100" fill="none"/></svg>
<svg style="left:613.5px;top:473.5px" width="8" height="5" viewBox="0 0 8 5"><path d="M.4 .4L4 4 7.600 .4" stroke="#444" stroke-width="1.100" fill="none"/></svg>
<svg style="left:7.699999999999999px;top:481.2px" width="9" height="9" viewBox="0 0 9 9"><path d="M6.200 1.100L2.800 4.500 6.200 7.900" stroke="#5a5a5a" stroke-width="1.900" fill="none"/></svg>
<svg style="left:193.8px;top:481.2px" width="9" height="9" viewBox="0 0 9 9"><path d="M2.800 1.100L6.200 4.500 2.800 7.900" stroke="#5a5a5a" stroke-width="1.900" fill="none"/></svg>
<svg style="left:221.6px;top:290.9px" width="9" height="9" viewBox="0 0 9 9"><path d="M6.200 1.100L2.800 4.500 6.200 7.900" stroke="#5a5a5a" stroke-width="1.900" fill="none"/></svg>
<svg style="left:695.3px;top:291.0px" width="9" height="9" viewBox="0 0 9 9"><path d="M2.800 1.100L6.200 4.500 2.800 7.900" stroke="#5a5a5a" stroke-width="1.900" fill="none"/></svg>
<svg style="left:711.9px;top:129.9px" width="9" height="9" viewBox="0 0 9 9"><path d="M1.100 6.200L4.500 2.800 7.900 6.200" stroke="#5a5a5a" stroke-width="1.900" fill="none"/></svg>
<svg style="left:711.9px;top:274.3px" width="9" height="9" viewBox="0 0 9 9"><path d="M1.100 2.800L4.500 6.200 7.900 2.800" stroke="#5a5a5a" stroke-width="1.900" fill="none"/></svg>
<svg style="left:224px;top:402.5px" width="8" height="13" viewBox="0 0 8 13"><path d="M0 0v13l7.600-6.500z" fill="#000"/></svg>
<div class="a" style="left:13px;top:135px;width:15px;height:1px;background:repeating-linear-gradient(90deg,#808080 0 1px,transparent 1px 2px)"></div>
<div class="a" style="left:35px;top:143px;width:1px;height:209px;background:repeating-linear-gradient(180deg,#808080 0 1px,transparent 1px 2px)"></div>
<div class="a" style="left:37px;top:153px;width:13px;height:1px;background:repeating-linear-gradient(90deg,#808080 0 1px,transparent 1px 2px)"></div>
<div class="a" style="left:37px;top:225px;width:13px;height:1px;background:repeating-linear-gradient(90deg,#808080 0 1px,transparent 1px 2px)"></div>
<div class="a" style="left:37px;top:243px;width:13px;height:1px;background:repeating-linear-gradient(90deg,#808080 0 1px,transparent 1px 2px)"></div>
<div class="a" style="left:37px;top:261px;width:13px;height:1px;background:repeating-linear-gradient(90deg,#808080 0 1px,transparent 1px 2px)"></div>
<div class="a" style="left:37px;top:279px;width:13px;height:1px;background:repeating-linear-gradient(90deg,#808080 0 1px,transparent 1px 2px)"></div>
<div class="a" style="left:37px;top:297px;width:13px;height:1px;background:repeating-linear-gradient(90deg,#808080 0 1px,transparent 1px 2px)"></div>
<div class="a" style="left:37px;top:315px;width:13px;height:1px;background:repeating-linear-gradient(90deg,#808080 0 1px,transparent 1px 2px)"></div>
<div class="a" style="left:37px;top:333px;width:13px;height:1px;background:repeating-linear-gradient(90deg,#808080 0 1px,transparent 1px 2px)"></div>
<div class="a" style="left:37px;top:351px;width:13px;height:1px;background:repeating-linear-gradient(90deg,#808080 0 1px,transparent 1px 2px)"></div>
<div class="a" style="left:57px;top:161px;width:1px;height:47px;background:repeating-linear-gradient(180deg,#808080 0 1px,transparent 1px 2px)"></div>
<div class="a" style="left:59px;top:171px;width:13px;height:1px;background:repeating-linear-gradient(90deg,#808080 0 1px,transparent 1px 2px)"></div>
<div class="a" style="left:59px;top:189px;width:13px;height:1px;background:repeating-linear-gradient(90deg,#808080 0 1px,transparent 1px 2px)"></div>
<div class="a" style="left:59px;top:207px;width:13px;height:1px;background:repeating-linear-gradient(90deg,#808080 0 1px,transparent 1px 2px)"></div>
<svg style="left:29.6px;top:131px" width="6" height="6" viewBox="0 0 6 6"><path d="M5.400 .5L2.500 3 5.400 5.500" stroke="#3a74ac" stroke-width="1.250" fill="none"/><path d="M0 3h3.600" stroke="#3a74ac" stroke-width="1.100"/></svg>
<svg style="left:35.9px;top:128.8px" width="5" height="10" viewBox="0 0 5 10"><rect x="0" y="0" width="4.800" height="10" rx="1.600" fill="#f0b24e"/></svg>
<svg style="left:51.2px;top:149px" width="6" height="6" viewBox="0 0 6 6"><path d="M5.400 .5L2.500 3 5.400 5.500" stroke="#3a74ac" stroke-width="1.250" fill="none"/><path d="M0 3h3.600" stroke="#3a74ac" stroke-width="1.100"/></svg>
<svg style="left:57.5px;top:147.5px" width="5" height="9" viewBox="0 0 5 9"><path d="M2.500 0L5 4.600H3.800L5 6.600H3.100V8.800H1.900V6.600H0L1.200 4.600H0z" fill="#22b14c"/></svg>
<svg style="left:73.3px;top:167px" width="6" height="6" viewBox="0 0 6 6"><path d="M5.400 .5L2.500 3 5.400 5.500" stroke="#3a74ac" stroke-width="1.250" fill="none"/><path d="M0 3h3.600" stroke="#3a74ac" stroke-width="1.100"/></svg>
<svg style="left:80.0px;top:165.5px" width="5" height="9" viewBox="0 0 5 9"><rect x=".6" y=".6" width="3.800" height="7.800" rx=".6" fill="#cfe2f5" stroke="#3a78b8" stroke-width="1.200"/><rect x="1.800" y="2" width="1.400" height="2" fill="#5b9bd5"/></svg>
<svg style="left:73.3px;top:185px" width="6" height="6" viewBox="0 0 6 6"><path d="M5.400 .5L2.500 3 5.400 5.500" stroke="#3a74ac" stroke-width="1.250" fill="none"/><path d="M0 3h3.600" stroke="#3a74ac" stroke-width="1.100"/></svg>
<svg style="left:80.0px;top:183.5px" width="5" height="9" viewBox="0 0 5 9"><rect x=".6" y=".6" width="3.800" height="7.800" rx=".6" fill="#cfe2f5" stroke="#3a78b8" stroke-width="1.200"/><rect x="1.800" y="2" width="1.400" height="2" fill="#5b9bd5"/></svg>
<svg style="left:73.3px;top:203px" width="6" height="6" viewBox="0 0 6 6"><path d="M5.400 .5L2.500 3 5.400 5.500" stroke="#3a74ac" stroke-width="1.250" fill="none"/><path d="M0 3h3.600" stroke="#3a74ac" stroke-width="1.100"/></svg>
<svg style="left:80.0px;top:201.5px" width="5" height="9" viewBox="0 0 5 9"><rect x=".6" y=".6" width="3.800" height="7.800" rx=".6" fill="#cfe2f5" stroke="#3a78b8" stroke-width="1.200"/><rect x="1.800" y="2" width="1.400" height="2" fill="#5b9bd5"/></svg>
<svg style="left:51.2px;top:221px" width="6" height="6" viewBox="0 0 6 6"><path d="M5.400 .5L2.500 3 5.400 5.500" stroke="#3a74ac" stroke-width="1.250" fill="none"/><path d="M0 3h3.600" stroke="#3a74ac" stroke-width="1.100"/></svg>
<svg style="left:57.5px;top:219.5px" width="5" height="9" viewBox="0 0 5 9"><path d="M2.500 0v9" stroke="#2b6496" stroke-width="1.600"/><path d="M.4 2.200l2.100 1.200 2.100-1.200M.4 6.800l2.100-1.200 2.100 1.200" stroke="#2b6496" stroke-width="1.200" fill="none"/></svg>
<svg style="left:51.2px;top:239px" width="6" height="6" viewBox="0 0 6 6"><path d="M5.400 .5L2.500 3 5.400 5.500" stroke="#3a74ac" stroke-width="1.250" fill="none"/><path d="M0 3h3.600" stroke="#3a74ac" stroke-width="1.100"/></svg>
<svg style="left:57.5px;top:237.5px" width="5" height="9" viewBox="0 0 5 9"><path d="M0 0h3L0 5z" fill="#22b14c"/><path d="M3 0h2v9H3.500L1 4z" fill="#f0a94a"/><path d="M0 5.500L2.800 9H0z" fill="#4a8cd2"/></svg>
<svg style="left:51.2px;top:257px" width="6" height="6" viewBox="0 0 6 6"><path d="M5.400 .5L2.500 3 5.400 5.500" stroke="#3a74ac" stroke-width="1.250" fill="none"/><path d="M0 3h3.600" stroke="#3a74ac" stroke-width="1.100"/></svg>
<svg style="left:57.5px;top:255.5px" width="5" height="9" viewBox="0 0 5 9"><path d="M2.800 0L2.200 9" stroke="#2b6496" stroke-width="1.600"/><path d="M.2 5.200L5 2.800" stroke="#2b6496" stroke-width="1.300"/></svg>
<svg style="left:51.2px;top:275px" width="6" height="6" viewBox="0 0 6 6"><path d="M5.400 .5L2.500 3 5.400 5.500" stroke="#3a74ac" stroke-width="1.250" fill="none"/><path d="M0 3h3.600" stroke="#3a74ac" stroke-width="1.100"/></svg>
<svg style="left:58.1px;top:273.5px" width="5" height="9" viewBox="0 0 5 9"><rect x="0" y="0" width="1.800" height="1.800" fill="#f0b050"/><rect x="2.800" y="3.400" width="1.800" height="1.800" fill="#f0b050"/><rect x=".6" y="7" width="1.800" height="1.800" fill="#f0b050"/></svg>
<svg style="left:51.2px;top:293px" width="6" height="6" viewBox="0 0 6 6"><path d="M5.400 .5L2.500 3 5.400 5.500" stroke="#3a74ac" stroke-width="1.250" fill="none"/><path d="M0 3h3.600" stroke="#3a74ac" stroke-width="1.100"/></svg>
<svg style="left:57.5px;top:291.5px" width="6" height="9" viewBox="0 0 6 9"><path d="M.6 0L5.800 8.400H.6z" fill="#a8604c"/></svg>
<svg style="left:51.2px;top:311px" width="6" height="6" viewBox="0 0 6 6"><path d="M5.400 .5L2.500 3 5.400 5.500" stroke="#3a74ac" stroke-width="1.250" fill="none"/><path d="M0 3h3.600" stroke="#3a74ac" stroke-width="1.100"/></svg>
<svg style="left:57.9px;top:309.5px" width="5" height="9" viewBox="0 0 5 9"><rect x=".6" y=".6" width="3.800" height="7.800" rx=".6" fill="#cfe2f5" stroke="#3a78b8" stroke-width="1.200"/><rect x="1.800" y="2" width="1.400" height="2" fill="#5b9bd5"/></svg>
<svg style="left:51.2px;top:329px" width="6" height="6" viewBox="0 0 6 6"><path d="M5.400 .5L2.500 3 5.400 5.500" stroke="#3a74ac" stroke-width="1.250" fill="none"/><path d="M0 3h3.600" stroke="#3a74ac" stroke-width="1.100"/></svg>
<svg style="left:58.1px;top:327.5px" width="5" height="9" viewBox="0 0 5 9"><rect x="0" y="0" width="1.800" height="1.800" fill="#f0b050"/><rect x="2.800" y="3.400" width="1.800" height="1.800" fill="#f0b050"/><rect x=".6" y="7" width="1.800" height="1.800" fill="#f0b050"/></svg>
<svg style="left:51.2px;top:347px" width="6" height="6" viewBox="0 0 6 6"><path d="M5.400 .5L2.500 3 5.400 5.500" stroke="#3a74ac" stroke-width="1.250" fill="none"/><path d="M0 3h3.600" stroke="#3a74ac" stroke-width="1.100"/></svg>
<svg style="left:58.1px;top:345.5px" width="5" height="9" viewBox="0 0 5 9"><rect x="0" y="0" width="1.800" height="1.800" fill="#f0b050"/><rect x="2.800" y="3.400" width="1.800" height="1.800" fill="#f0b050"/><rect x=".6" y="7" width="1.800" height="1.800" fill="#f0b050"/></svg>
</body></html>
